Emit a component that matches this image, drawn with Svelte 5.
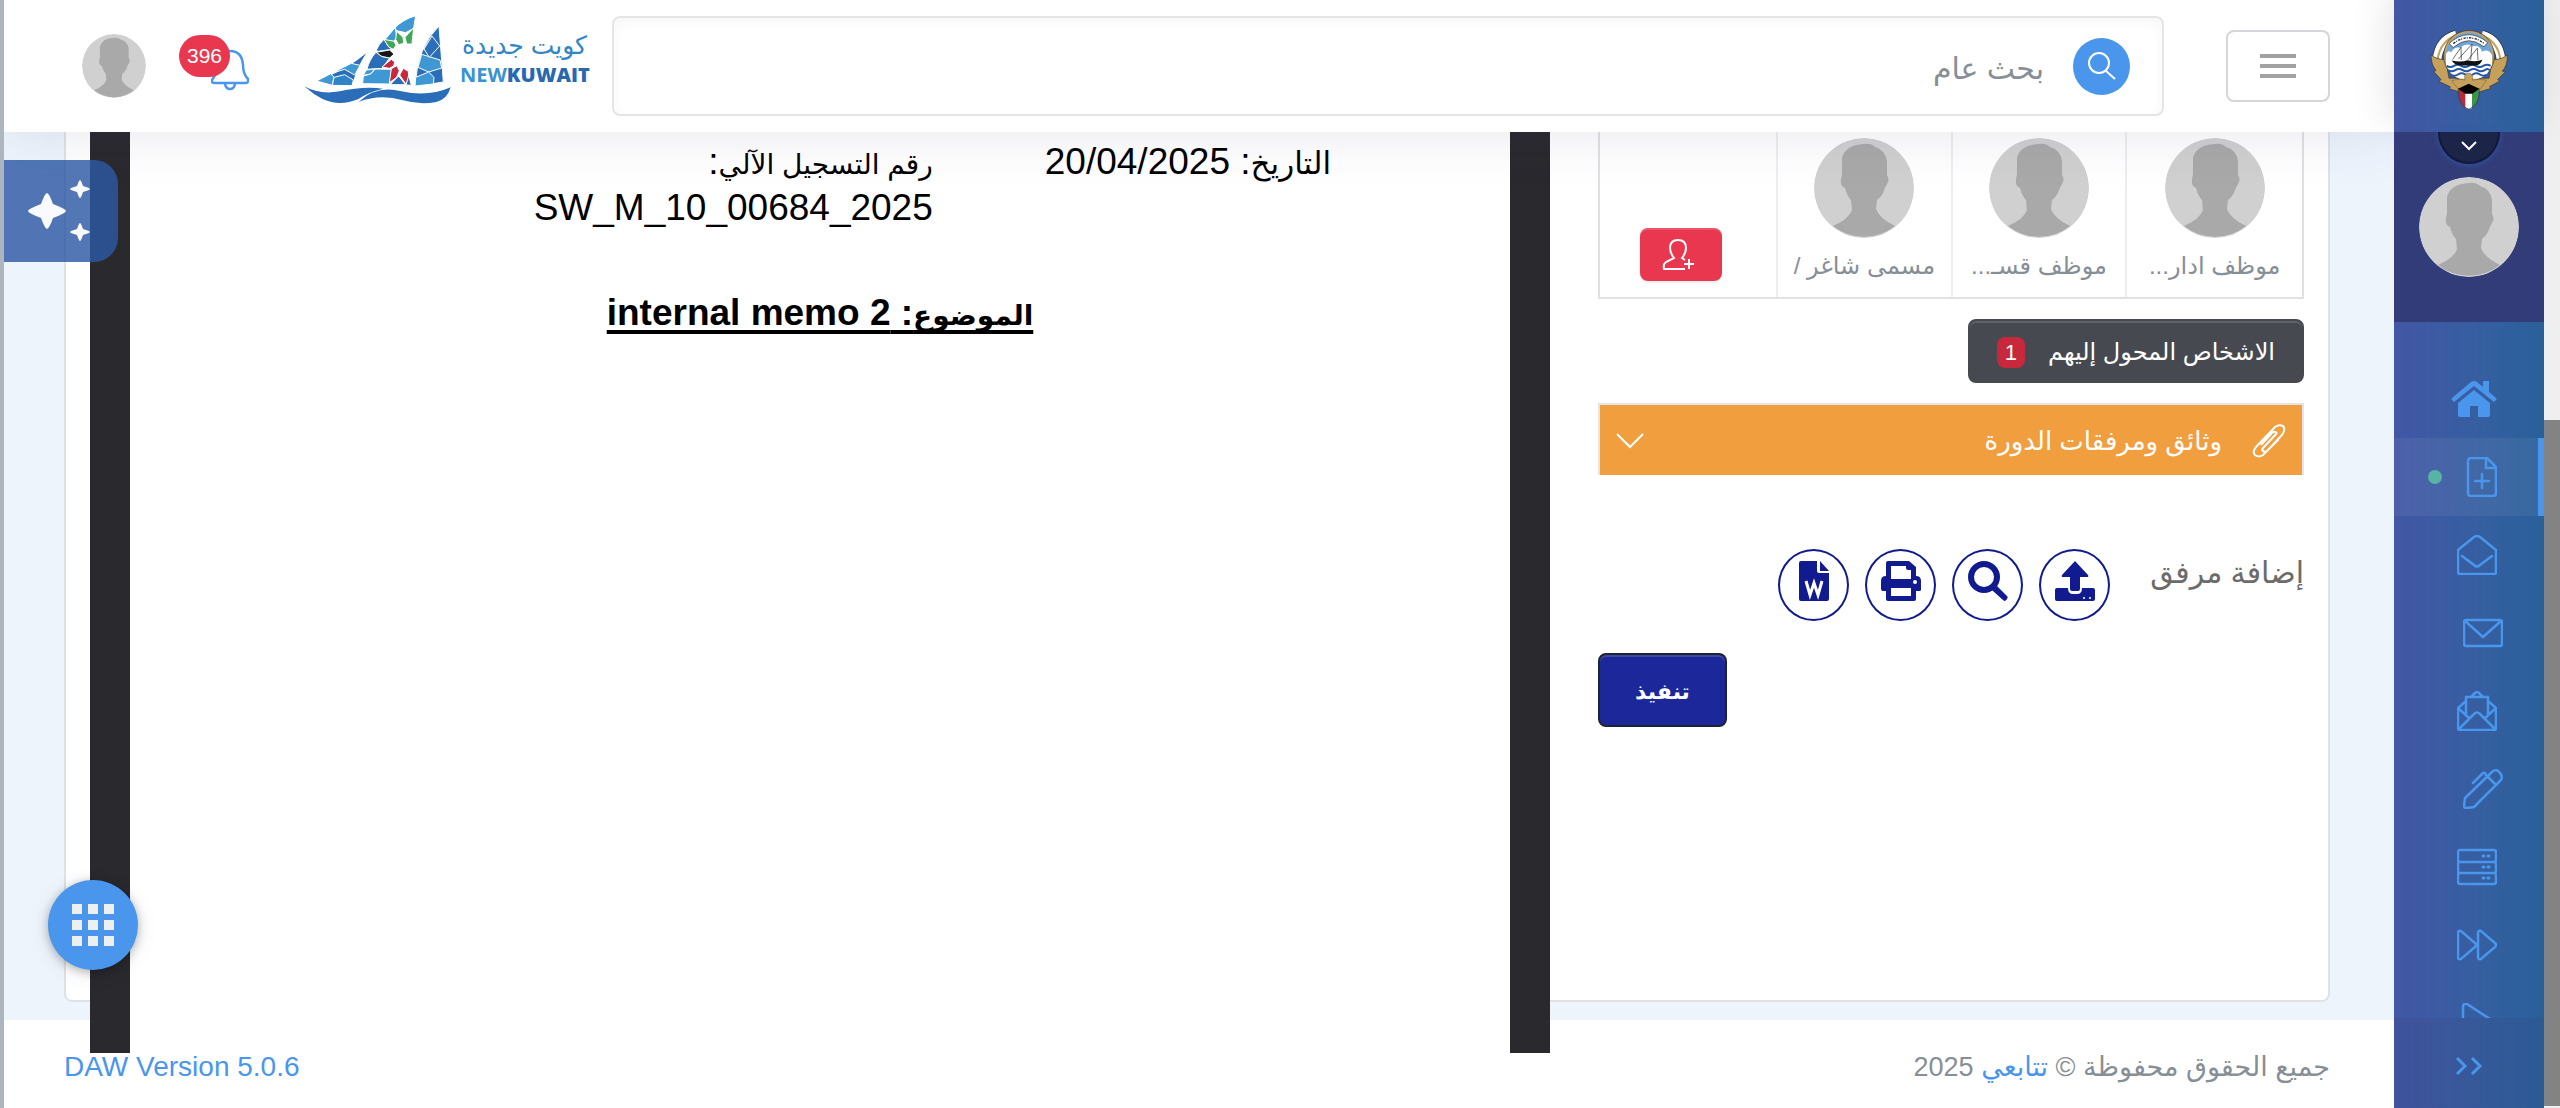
<script>
  const people = ['موظف ادار...', 'موظف قسـ...', 'مسمى شاغر /'];
  const nav = [
    { id: 'home', label: 'الرئيسية' },
    { id: 'file', label: 'مستند جديد', active: true },
    { id: 'inbox', label: 'الوارد' },
    { id: 'mail', label: 'البريد' },
    { id: 'letter', label: 'الرسائل' },
    { id: 'pen', label: 'المسودات' },
    { id: 'server', label: 'الأرشيف' },
    { id: 'forward', label: 'المحول' },
    { id: 'play', label: 'المتابعة' }
  ];
  const shifted = ['mail', 'pen'];
</script>

{#snippet avatar(size)}
  <svg class="avatar {size}" viewBox="0 0 100 100" aria-hidden="true">
    <circle cx="50" cy="50" r="50" fill="#d0d0d0" />
    <path fill="#a9a9a9" d="M28 20 Q31 7 50 6 Q57 5 61 9 Q72 12 73 24 L73 37 Q76 41 73 46 Q71 49 69 55 Q67 59 63 62 L62 71 Q65 80 81 88 A50 50 0 0 1 19 88 Q35 81 38 72 L37 62 Q33 58 31 50 Q26 48 27 41 L28 36 Z" />
  </svg>
{/snippet}

<div class="shell" dir="rtl">
  <div class="scroll"><div class="thumb"></div></div>

  <aside>
    <div class="brand">
      <svg viewBox="90 55 240 245" aria-label="شعار دولة الكويت" role="img">
        <g fill="none">
          <path stroke="#222b45" stroke-width="30" d="M114 150 Q120 90 172 75 M306 150 Q300 90 248 75" />
          <path stroke="#fff" stroke-width="26" d="M114 150 Q120 90 172 75 M306 150 Q300 90 248 75" />
          <path stroke="#c6a15b" stroke-width="6" d="M116 150 Q122 94 176 74 M304 150 Q298 94 244 74" />
        </g>
        <path fill="#c6a15b" stroke="#333" stroke-width="2" d="M96 135 Q112 149 140 150 L150 205 H270 L280 150 Q310 149 325 135 Q326 168 310 184 L319 186 L296 209 L302 214 L272 230 L275 236 L242 246 L210 262 L180 246 L151 237 L154 231 L120 215 L126 209 L104 185 L111 182 Q96 164 96 135 Z" />
        <circle cx="210" cy="138" r="76" fill="#c6a15b" stroke="#333" stroke-width="2" />
        <circle cx="210" cy="138" r="70" fill="#6fa4d6" />
        <path fill="#fff" d="M141 135 Q144 119 157 127 Q166 109 183 114 Q202 97 224 109 Q244 107 249 126 Q267 115 279 135 V168 H141 Z" />
        <path fill="#fff" d="M141 160 H279 Q271 200 235 207 H185 Q150 198 141 160 Z" />
        <g fill="none" stroke="#2458a6" stroke-width="6">
          <path d="M143 168 q11 7 22 0 t22 0 t22 0 t22 0 t22 0 t22 0" />
          <path d="M147 181 q11 7 22 0 t22 0 t22 0 t22 0 t22 0 t14 0" />
          <path d="M155 194 q11 7 22 0 t22 0 t22 0 t22 0 t20 0" />
        </g>
        <path fill="#111" d="M158 152 Q185 158 206 151 Q230 158 250 150 Q244 167 230 167 H184 Q167 166 158 152 Z" />
        <path fill="#fff" stroke="#222" stroke-width="2" d="M161 149 L186 112 L187 150 M178 148 L219 103 L215 151 M207 150 L235 115 L237 151" />
        <path fill="#fff" stroke="#333" stroke-width="2" d="M150 101 Q208 50 266 98 L255 111 Q208 73 163 113 Z" />
        <path fill="none" stroke="#222" stroke-width="4" stroke-dasharray="7 3 3 4" d="M163 101 Q208 67 254 100" />
        <path fill="#c6a15b" stroke="#333" stroke-width="1" d="M196 199 L203 190 H214 Q224 197 220 211 Q237 206 262 211 L244 238 H178 L158 213 Q182 205 198 211 Z" />
        <path fill="#b72c3c" d="M178 237 L199 247 V294 Q179 281 178 237 Z" />
        <path fill="#fff" d="M199 247 H219 V295 L210 298 L199 294 Z" />
        <path fill="#3d9448" d="M219 247 L240 237 Q242 278 219 295 Z" />
        <path fill="#000" d="M177 237 L209 222 L241 237 L220 252 H199 Z" />
        <path fill="none" stroke="#333" stroke-width="2" d="M177 237 Q177 290 209 298 Q244 286 241 237" />
      </svg>
    </div>

    <div class="profile">
      <button class="fold" aria-label="عرض الملف">
        <svg viewBox="0 0 18 12"><path d="M2 2 L9 9 L16 2" /></svg>
      </button>
      {@render avatar('lg')}
    </div>

    <nav>
      {#each nav as item}
        <a href="#{item.id}" class:active={item.active} class:shifted={shifted.includes(item.id)} aria-label={item.label}>
          {#if item.id === 'home'}
            <svg class="home" viewBox="0 0 46 36">
              <path d="M23 9 L39 22 V34 Q39 36 37 36 H27 V25 H19 V36 H9 Q7 36 7 34 V22 Z" />
              <path d="M20 1 Q23 -1 26 1 L32 6 V0 H38 V11 L45 17 Q46 18 45 19 L43 21 L23 5 L3 21 L1 19 Q0 18 1 17 Z" />
            </svg>
          {:else if item.id === 'file'}
            <svg viewBox="0 0 40 40">
              <path d="M13 1 H30 L39 10 V36 Q39 39 36 39 H14 Q11 39 11 36 V4 Q11 1 14 1 M29 1 V11 H39 M25 17 V31 M18 24 H32" />
            </svg>
            <i class="dot"></i>
          {:else if item.id === 'inbox'}
            <svg viewBox="0 0 40 40">
              <path d="M1 15 L17 2 Q20 0 23 2 L39 15 V37 Q39 39 37 39 H3 Q1 39 1 37 Z M5 21 L17 30 Q20 33 23 30 L35 21" />
            </svg>
          {:else if item.id === 'mail'}
            <svg viewBox="0 0 40 40">
              <path d="M3 7 H37 Q39 7 39 9 V31 Q39 33 37 33 H3 Q1 33 1 31 V9 Q1 7 3 7 Z M2 8 L20 24 L38 8" />
            </svg>
          {:else if item.id === 'letter'}
            <svg viewBox="0 0 40 40">
              <path d="M1 17 V37 Q1 39 3 39 H37 Q39 39 39 37 V17 L31 10 V6 H9 V10 L1 17 L12 27 M39 17 L28 27 M9 6 V24 M31 6 V24 M14 6 L18 2 Q20 0 22 2 L26 6 M2 38 L17 23 Q20 20 23 23 L38 38" />
            </svg>
          {:else if item.id === 'pen'}
            <svg viewBox="0 0 40 40">
              <path d="M2 29 L29 3 Q32 0 35 2 L37 4 Q40 7 38 11 L11 38 L3 39 Q1 39 1 37 Z M24 7 L33 16 M10 14 L20 4 Q22 3 23 6" />
            </svg>
          {:else if item.id === 'server'}
            <svg viewBox="0 0 40 40">
              <path d="M3 3 H37 Q39 3 39 5 V13 Q39 15 37 15 H3 Q1 15 1 13 V5 Q1 3 3 3 Z M3 15 H37 Q39 15 39 17 V24 Q39 26 37 26 H3 Q1 26 1 24 V17 Q1 15 3 15 M3 26 H37 Q39 26 39 28 V35 Q39 37 37 37 H3 Q1 37 1 35 V28 Q1 26 3 26" />
              <path d="M26 9 h1 M31 9 h1 M26 20 h1 M31 20 h1 M26 31 h1 M31 31 h1" stroke-width="3" />
            </svg>
          {:else if item.id === 'forward'}
            <svg viewBox="0 0 40 40">
              <path d="M1 8 Q1 5 4 6 L18 18 Q20 20 18 22 L4 34 Q1 35 1 32 Z M21 8 Q21 5 24 6 L38 18 Q40 20 38 22 L24 34 Q21 35 21 32 Z" />
            </svg>
          {:else}
            <svg viewBox="0 0 40 40">
              <path d="M6 4 Q6 0 10 1 L36 18 Q39 20 36 22 L10 39 Q6 40 6 36 Z" />
            </svg>
          {/if}
        </a>
      {/each}
    </nav>

    <button class="collapse" aria-label="طي القائمة">
      <svg viewBox="0 0 28 20"><path d="M2 2 L10 10 L2 18 M17 2 L25 10 L17 18" /></svg>
    </button>
  </aside>

  <div class="main">
    <header>
      <button class="menu" aria-label="القائمة"><span></span><span></span><span></span></button>
      <form class="search">
        <button type="button" aria-label="بحث">
          <svg viewBox="0 0 28 28"><circle cx="11" cy="11" r="10" /><path d="M18 19 L27 27" /></svg>
        </button>
        <input type="text" placeholder="بحث عام" aria-label="بحث عام" />
      </form>
      <a class="logo" href="#home">
        <span class="words">
          <span class="ar">كويت جديدة</span>
          <span class="en" dir="ltr">NEW<b>KUWAIT</b></span>
        </span>
        <svg viewBox="25 45 450 270" aria-hidden="true">
          <g stroke="#fff" stroke-width="3" stroke-linejoin="round">
            <path fill="#2a6db8" d="M64 243 Q150 212 219 155 Q188 200 173 258 Q120 260 64 243 Z" />
            <path fill="#3f98d4" d="M112 219 L170 190 L196 196 L180 225 L150 208 Z" />
            <path fill="#3f98d4" d="M66 243 L108 221 L118 232 L113 256 Z" />
            <path fill="#2f84c8" d="M118 232 L150 224 L176 240 L172 257 L113 256 Z" />
            <path fill="#3f98d4" d="M300 84 Q325 58 363 47 L357 85 L333 98 L306 92 Z" />
            <path fill="#3f98d4" d="M270 120 L302 82 L306 112 L298 124 Z" />
            <path fill="#2a6db8" d="M244 152 Q252 132 268 118 L280 138 L292 148 L250 154 Z" />
            <path fill="#43a556" d="M268 118 L298 124 L304 136 L296 148 L282 141 Z" />
            <path fill="#43a556" d="M306 94 L325 112 L327 130 L312 134 L303 118 Z" />
            <path fill="#43a556" d="M357 83 L352 132 L336 132 L331 112 Z" />
            <path fill="#171717" d="M244 157 L285 150 L298 162 L285 174 L262 170 Z" />
            <path fill="#2a6db8" d="M244 157 L262 170 L285 174 L262 205 L217 208 Q224 178 244 157 Z" />
            <path fill="#3f98d4" d="M215 210 L240 207 L228 222 L206 226 Z" />
            <path fill="#3f98d4" d="M206 228 L228 222 L242 207 L290 208 L286 252 L204 251 Z" />
            <path fill="#c8283c" d="M262 201 L290 178 L300 186 L297 198 L284 205 Z" />
            <path fill="#c8283c" d="M290 206 L306 197 L314 212 L306 232 L284 248 Z" />
            <path fill="#c8283c" d="M326 205 L341 214 L342 232 L334 253 L315 225 Z" />
            <path fill="#2a6db8" d="M312 228 L333 254 L286 254 Z M342 226 L350 256 L334 255 Z" />
            <path fill="#2a6db8" d="M433 78 L446 246 L361 259 Q368 140 433 78 Z" />
            <path fill="#3f98d4" d="M381 163 L436 180 L441 204 L402 216 L370 202 Z" />
            <path fill="#2a6db8" d="M388 147 L412 108 L435 138 L404 172 Z" />
            <path fill="#3f98d4" d="M402 216 L418 232 L416 252 L361 258 L363 232 Z" />
          </g>
          <path fill="#2a6db8" d="M29 259 Q75 285 135 274 Q205 258 265 266 Q220 276 190 298 Q135 320 85 298 Q55 283 29 259 Z" />
          <path fill="#2a6db8" d="M192 306 Q245 255 320 274 Q400 292 468 262 Q458 298 425 306 Q375 315 325 301 Q255 281 192 306 Z" />
        </svg>
      </a>
      <button class="bell" aria-label="الإشعارات 396">
        <svg viewBox="0 0 38 42">
          <path d="M19 2 Q31 2 32 16 Q32 25 37 30 Q38 34 34 34 H4 Q0 34 1 31 Q6 25 6 16 Q7 2 19 2 M14 35 Q15 40 19 40 Q23 40 24 35" />
        </svg>
        <span class="count">396</span>
      </button>
      {@render avatar('sm')}
    </header>

    <div class="content">
      <div class="card">
        <section class="panel">
          <div class="people">
            {#each people as name}
              <div class="person">
                {@render avatar('lg')}
                <span>{name}</span>
              </div>
            {/each}
            <div class="person add">
              <button aria-label="إضافة شخص">
                <svg viewBox="0 0 32 32">
                  <path d="M23 30 H2 Q1 25 4 23 L12 19 Q8 14 8 9 Q8 1 16 1 Q24 1 24 9 Q24 14 20 19 L23 21 M27 20 V30 M22 25 H32" />
                </svg>
              </button>
            </div>
          </div>

          <button class="forwarded">الاشخاص المحول إليهم <span>1</span></button>

          <button class="docs">
            <svg class="clip" viewBox="0 0 34 34">
              <path d="M25 9 L12 23 Q9 26 11 27 Q13 29 16 26 L30 11 Q34 5 31 2 Q27 0 23 3 L4 23 Q0 28 3 31 Q7 34 11 31 L27 15 M25 9 Q22 6 19 10 L9 21" />
            </svg>
            <span>وثائق ومرفقات الدورة</span>
            <svg class="down" viewBox="0 0 28 16"><path d="M1 1 L14 14 L27 1" /></svg>
          </button>

          <div class="attach">
            <h4>إضافة مرفق</h4>
            <button aria-label="رفع">
              <svg viewBox="0 0 40 40">
                <path d="M20 0 L33 14 Q34 16 32 16 H25 V28 Q25 30 23 30 H17 Q15 30 15 28 V16 H8 Q6 16 7 14 Z" />
                <path d="M2 27 H13 Q13 33 18 33 H22 Q27 33 27 27 H38 Q40 27 40 29 V38 Q40 40 38 40 H2 Q0 40 0 38 V29 Q0 27 2 27 Z" />
                <circle cx="29" cy="37" r="1" fill="#fff" /><circle cx="35" cy="37" r="1" fill="#fff" />
              </svg>
            </button>
            <button aria-label="بحث">
              <svg viewBox="0 0 40 40">
                <circle cx="16" cy="16" r="13" fill="none" stroke="#111b8f" stroke-width="6" />
                <path d="M24 29 L29 25 L39 35 Q41 37 37 40 Q36 40 35 39 L25 30 Z" />
              </svg>
            </button>
            <button aria-label="طباعة">
              <svg viewBox="0 0 40 40">
                <path fill-rule="evenodd" d="M7 0 H28 L35 6 V15 Q40 15 40 20 V29 Q40 30 38 30 H35 V38 Q35 40 33 40 H7 Q5 40 5 38 V30 H2 Q0 30 0 28 V20 Q0 15 5 15 V2 Q5 0 7 0 Z M10 5 V18 H30 V9 H27 Q25 9 25 7 V5 Z M10 27 V35 H30 V27 Z" />
                <circle cx="34" cy="21" r="2" fill="#fff" />
              </svg>
            </button>
            <button aria-label="Word">
              <svg viewBox="0 0 40 40">
                <path d="M7 0 H23 V10 Q23 12 25 12 H35 V38 Q35 40 33 40 H7 Q5 40 5 38 V2 Q5 0 7 0 Z M26 0 L35 10 H26 Z" />
                <path fill="none" stroke="#fff" stroke-width="3" d="M12 20 L16 34 L20 22 L24 34 L28 20" />
              </svg>
            </button>
          </div>

          <button class="run">تنفيذ</button>
        </section>

        <section class="viewer">
          <article class="page">
            <div class="meta">
              <p class="date"><span>التاريخ</span>: 20/04/2025</p>
              <p class="serial"><span>رقم التسجيل الآلي</span>: <bdi>SW_M_10_00684_2025</bdi></p>
            </div>
            <h2><span>الموضوع</span>: internal memo 2</h2>
          </article>
        </section>
      </div>
    </div>

    <footer>
      <p>جميع الحقوق محفوظة © <a href="#site">تتابعي</a> 2025</p>
      <a class="version" href="#version" dir="ltr">DAW Version 5.0.6</a>
    </footer>

    <button class="assistant" aria-label="المساعد">
      <svg viewBox="0 0 64 62">
        <path d="M19 13 Q21 13 25 24 Q38 29 38 31 Q38 33 25 38 Q21 49 19 49 Q17 49 13 38 Q0 33 0 31 Q0 29 13 24 Q17 13 19 13 Z" />
        <path d="M52 0 Q53 0 55 6 Q62 8 62 9 Q62 10 55 12 Q53 18 52 18 Q51 18 49 12 Q42 10 42 9 Q42 8 49 6 Q51 0 52 0 Z" />
        <path d="M52 43 Q53 43 55 49 Q62 51 62 52 Q62 53 55 55 Q53 61 52 61 Q51 61 49 55 Q42 53 42 52 Q42 51 49 49 Q51 43 52 43 Z" />
      </svg>
    </button>
    <button class="fab" aria-label="التطبيقات">
      {#each Array(9) as _}<i></i>{/each}
    </button>
  </div>
</div>

<style>
  :global(body) {
    background: #fff;
  }
  .shell {
    --blue: #4a96ec;
    display: grid;
    grid-template-columns: 16px 150px minmax(0, 1fr);
    height: 100vh;
    overflow: hidden;
    box-sizing: border-box;
    border-left: 4px solid #adb5bf;
    font-family: 'Liberation Sans', 'DejaVu Sans', sans-serif;
    color: #868e96;
  }
  .shell :global(*) {
    box-sizing: border-box;
  }
  button,
  input {
    font-family: inherit;
    margin: 0;
    padding: 0;
    border: 0;
    color: inherit;
  }
  button {
    cursor: pointer;
  }
  a {
    color: var(--blue);
    text-decoration: none;
  }
  svg {
    display: block;
  }
  p, h2, h4 {
    margin: 0;
  }

  .scroll {
    display: flex;
    flex-direction: column;
    justify-content: flex-end;
    padding-bottom: 2px;
    background: #efefef;
  }
  .thumb {
    height: 62%;
    background: #838383;
  }

  aside {
    position: relative;
    z-index: 3;
    display: flex;
    flex-direction: column;
    min-height: 0;
    background: linear-gradient(90deg, #4257a5, #355fa0 60%, #29609a);
  }
  .brand {
    flex: none;
    display: flex;
    justify-content: center;
    height: 132px;
    padding-top: 28px;
    box-shadow: -6px -10px 36px rgba(0, 0, 0, 0.1);
  }
  .brand svg {
    width: 80px;
    height: 82px;
  }
  .profile {
    flex: none;
    display: flex;
    flex-direction: column;
    align-items: center;
    gap: 13px;
    height: 190px;
    background: #313c78;
  }
  .fold {
    display: flex;
    justify-content: center;
    width: 62px;
    height: 32px;
    padding-top: 8px;
    border: 2px solid #12183a;
    border-top: 0;
    border-radius: 0 0 31px 31px;
    background: #1c2448;
    box-shadow: 0 1px 6px rgba(50, 95, 180, 0.7);
  }
  .fold svg {
    width: 18px;
    height: 12px;
    fill: none;
    stroke: #fff;
    stroke-width: 2;
  }
  .avatar {
    flex: none;
    border-radius: 50%;
  }
  .avatar.lg {
    width: 100px;
    height: 100px;
  }
  .avatar.sm {
    width: 64px;
    height: 64px;
  }
  nav {
    flex: 1;
    min-height: 0;
    overflow: hidden;
    padding-top: 38px;
  }
  nav a {
    display: flex;
    align-items: center;
    gap: 15px;
    height: 78px;
    padding-right: 47px;
  }
  nav a.shifted {
    padding-right: 41px;
  }
  nav a.active {
    padding-right: 41px;
    border-right: 6px solid var(--blue);
    background: rgba(255, 255, 255, 0.06);
  }
  nav svg {
    width: 40px;
    height: 40px;
    fill: none;
    stroke: var(--blue);
    stroke-width: 2.5;
    stroke-linecap: round;
  }
  nav svg.home {
    width: 46px;
    height: 36px;
    fill: var(--blue);
    stroke: none;
  }
  .dot {
    width: 14px;
    height: 14px;
    border-radius: 50%;
    background: #59b3a5;
  }
  .collapse {
    flex: none;
    display: flex;
    align-items: center;
    height: 90px;
    padding: 6px 61px 0 0;
    background: rgba(54, 60, 120, 0.16);
  }
  .collapse svg {
    width: 28px;
    height: 20px;
    fill: none;
    stroke: var(--blue);
    stroke-width: 3;
  }

  .main {
    position: relative;
    display: flex;
    flex-direction: column;
    min-width: 0;
    min-height: 0;
  }
  header {
    position: relative;
    z-index: 2;
    flex: none;
    display: flex;
    align-items: center;
    height: 132px;
    padding: 0 64px 0 78px;
    background: #fff;
    box-shadow: 0 0 60px rgba(60, 65, 110, 0.13);
  }
  .menu {
    flex: none;
    display: flex;
    flex-direction: column;
    align-items: center;
    justify-content: center;
    gap: 6px;
    width: 104px;
    height: 72px;
    margin-left: 62px;
    border: 2px solid #d5d6da;
    border-radius: 8px;
    background: #fff;
  }
  .menu span {
    width: 36px;
    height: 4px;
    background: #a2a2a2;
  }
  .search {
    flex: 1;
    display: flex;
    align-items: center;
    gap: 29px;
    height: 100px;
    padding: 0 32px;
    border: 2px solid #e4e5e6;
    border-radius: 8px;
    box-shadow: inset 0 4px 12px rgba(0, 0, 0, 0.04);
  }
  .search button {
    flex: none;
    display: grid;
    place-items: center;
    width: 57px;
    height: 57px;
    border-radius: 50%;
    background: var(--blue);
  }
  .search svg {
    width: 28px;
    height: 28px;
    fill: none;
    stroke: #fff;
    stroke-width: 2;
  }
  .search input {
    flex: 1;
    min-width: 0;
    height: 80px;
    padding-top: 6px;
    outline: 0;
    background: none;
    font-size: 30px;
  }
  .search input::placeholder {
    color: #868e96;
    opacity: 1;
  }
  .logo {
    flex: none;
    display: flex;
    gap: 7px;
    margin: 0 25px 12px 54px;
  }
  .logo svg {
    width: 150px;
    height: 90px;
  }
  .words {
    display: flex;
    flex-direction: column;
    padding-top: 12px;
    width: 127px;
  }
  .ar {
    height: 34px;
    font-size: 25px;
    line-height: 36px;
    color: #3285c6;
    white-space: nowrap;
  }
  .en {
    font: 700 20px/28px 'Open Sans', sans-serif;
    color: #3a92cf;
    white-space: nowrap;
  }
  .en b {
    color: #2768b0;
  }
  .bell {
    position: relative;
    flex: none;
    width: 38px;
    height: 42px;
    margin: 8px 0 0 65px;
    background: none;
  }
  .bell svg {
    width: 38px;
    height: 42px;
    fill: none;
    stroke: var(--blue);
    stroke-width: 2.5;
  }
  .count {
    position: absolute;
    top: -14px;
    right: 19px;
    width: 51px;
    border-radius: 21px;
    background: #e8374f;
    color: #fff;
    font-size: 21px;
    line-height: 42px;
    text-align: center;
  }

  .content {
    flex: 1;
    min-height: 0;
    display: flex;
    padding: 0 64px 18px 60px;
    background: #edf4fc;
  }
  .card {
    flex: 1;
    display: grid;
    grid-template-columns: 706fr 1460fr;
    gap: 48px;
    padding: 0 24px;
    border: 2px solid #dee2e6;
    border-top: 0;
    border-radius: 0 0 8px 8px;
    background: #fff;
  }
  .panel {
    display: flex;
    flex-direction: column;
    align-items: flex-start;
    min-width: 0;
  }
  .people {
    align-self: stretch;
    display: grid;
    grid-template-columns: repeat(4, 1fr);
    height: 167px;
    border: 2px solid #dee2e6;
    border-top: 0;
  }
  .person {
    display: flex;
    flex-direction: column;
    align-items: center;
    gap: 11px;
    padding-top: 6px;
    font-size: 24px;
    line-height: 34px;
    white-space: nowrap;
  }
  .person + .person {
    border-right: 2px solid #eceef0;
  }
  .add {
    align-items: flex-end;
    padding: 96px 54px 0 40px;
  }
  .add button {
    display: grid;
    place-items: center;
    width: 82px;
    height: 53px;
    padding-right: 6px;
    border-radius: 8px;
    background: #e8374f;
    box-shadow: inset 0 2px 0 rgba(255, 255, 255, 0.15), 0 2px 2px rgba(0, 0, 0, 0.08);
  }
  .add svg {
    width: 32px;
    height: 32px;
    fill: none;
    stroke: #fff;
    stroke-width: 2;
  }
  .forwarded {
    display: flex;
    align-items: center;
    gap: 23px;
    height: 64px;
    margin-top: 20px;
    padding: 2px 27px 0;
    border: 2px solid #464a50;
    border-radius: 8px;
    background: #464a50;
    box-shadow: inset 0 2px 0 #5d6369;
    color: #fff;
    font-size: 24px;
    white-space: nowrap;
  }
  .forwarded span {
    width: 28px;
    border-radius: 8px;
    background: #c7283c;
    font-size: 22px;
    line-height: 31px;
  }
  .docs {
    align-self: stretch;
    display: flex;
    align-items: center;
    height: 72px;
    margin-top: 20px;
    padding: 2px 16px 0;
    border: 2px solid #e3e5e8;
    border-bottom: 0;
    background: #f19e3e;
    color: #fff;
    font-size: 26px;
  }
  .docs svg {
    fill: none;
    stroke: #fff;
    stroke-width: 2;
  }
  .clip {
    width: 34px;
    height: 34px;
    margin-left: 30px;
  }
  .down {
    width: 28px;
    height: 16px;
    margin-right: auto;
  }
  .attach {
    display: flex;
    gap: 16px;
    margin-top: 74px;
  }
  .attach h4 {
    margin-left: 24px;
    color: #6b6b6b;
    font-size: 30px;
    font-weight: 400;
    line-height: 48px;
    white-space: nowrap;
  }
  .attach button {
    display: flex;
    justify-content: center;
    width: 71px;
    height: 72px;
    padding-top: 10px;
    border: 2px solid #111b8f;
    border-radius: 50%;
    background: #fff;
  }
  .attach svg {
    width: 40px;
    height: 40px;
    fill: #111b8f;
  }
  .run {
    align-self: flex-end;
    width: 129px;
    height: 74px;
    margin-top: 32px;
    padding-top: 4px;
    border: 2px solid #1d2530;
    border-radius: 8px;
    background: #1c2899;
    box-shadow: inset 0 2px 0 #4049a8;
    color: #fff;
    font-size: 22px;
    font-weight: 700;
  }

  .viewer {
    position: relative;
    z-index: 1;
    margin-bottom: -53px;
    padding: 0 40px;
    background: #2a292e;
  }
  .page {
    height: 100%;
    padding-top: 8px;
    background: #fff;
    color: #000;
    font-size: 37px;
    line-height: 43px;
  }
  .meta {
    display: flex;
    gap: 112px;
    padding-right: 179px;
  }
  .serial {
    width: 400px;
  }
  .page span {
    font-size: 28px;
  }
  .date span {
    font-size: 31px;
  }
  h2 {
    margin-top: 62px;
    font-size: 37px;
    text-align: center;
    text-decoration: underline;
    text-decoration-thickness: 4px;
    text-decoration-skip-ink: none;
    text-underline-offset: 5px;
  }

  footer {
    flex: none;
    display: flex;
    align-items: center;
    justify-content: space-between;
    height: 88px;
    padding: 6px 64px 0 60px;
    background: #fff;
    font-size: 27px;
  }
  .version {
    font-size: 28px;
  }

  .assistant {
    position: absolute;
    z-index: 2;
    top: 160px;
    left: 0;
    display: flex;
    align-items: center;
    width: 114px;
    height: 102px;
    padding-right: 26px;
    border-radius: 0 24px 24px 0;
    background: rgba(45, 88, 163, 0.82);
  }
  .assistant svg {
    width: 64px;
    height: 62px;
    fill: #f8fafd;
  }
  .fab {
    position: absolute;
    z-index: 2;
    bottom: 138px;
    left: 44px;
    display: grid;
    grid-template-columns: repeat(3, 10px);
    grid-auto-rows: 10px;
    gap: 6px;
    place-content: center;
    width: 90px;
    height: 90px;
    border-radius: 50%;
    background: var(--blue);
    box-shadow: 0 2px 10px rgba(0, 0, 0, 0.26), 0 4px 20px rgba(0, 0, 0, 0.1);
  }
  .fab i {
    background: #ecf0f1;
  }
</style>
